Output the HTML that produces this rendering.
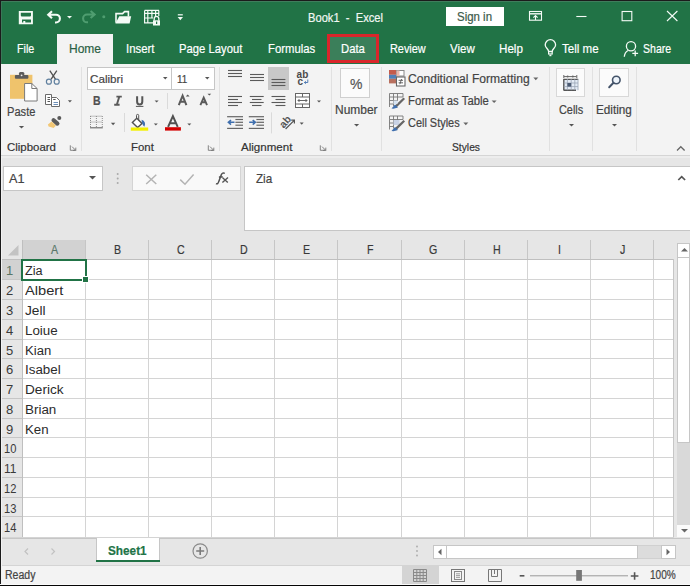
<!DOCTYPE html>
<html><head><meta charset="utf-8"><style>
html,body{margin:0;padding:0;width:690px;height:586px;overflow:hidden;background:#f3f3f3}
body>*{position:absolute;box-sizing:border-box}
span{font-family:"Liberation Sans",sans-serif;white-space:nowrap;transform-origin:0 0;-webkit-text-stroke:0.2px currentColor}
svg{overflow:visible}
</style></head><body>
<div style="left:0px;top:0px;width:690px;height:586px;background:#f3f3f3;"></div>
<div style="left:0px;top:0px;width:690px;height:64px;background:#217346;"></div>
<div style="left:57px;top:34px;width:56px;height:30px;background:#f3f3f3;"></div>
<div style="left:327px;top:34px;width:52px;height:29px;background:#3b7f5a;box-shadow:inset 0 0 0 3px #d9262b;"></div>
<span style="left:307.80px;top:12.00px;font-size:12.6px;line-height:12.6px;color:#f2f8f4;transform:scaleX(0.8851);">Book1&nbsp;&nbsp;-&nbsp;&nbsp;Excel</span>
<div style="left:446px;top:7px;width:58px;height:19px;background:#ffffff;"></div>
<span style="left:457.20px;top:11.00px;font-size:12px;line-height:12px;color:#3c5a4a;transform:scaleX(0.9539);">Sign in</span>
<span style="left:17.20px;top:42.00px;font-size:13px;line-height:13px;color:#ffffff;transform:scaleX(0.8259);">File</span>
<span style="left:68.50px;top:42.00px;font-size:13px;line-height:13px;color:#2a5f44;transform:scaleX(0.9228);">Home</span>
<span style="left:125.60px;top:42.00px;font-size:13px;line-height:13px;color:#ffffff;transform:scaleX(0.8736);">Insert</span>
<span style="left:179.30px;top:42.00px;font-size:13px;line-height:13px;color:#ffffff;transform:scaleX(0.8671);">Page&nbsp;Layout</span>
<span style="left:268.00px;top:42.00px;font-size:13px;line-height:13px;color:#ffffff;transform:scaleX(0.8713);">Formulas</span>
<span style="left:340.70px;top:42.00px;font-size:13px;line-height:13px;color:#ffffff;transform:scaleX(0.8704);">Data</span>
<span style="left:389.50px;top:42.00px;font-size:13px;line-height:13px;color:#ffffff;transform:scaleX(0.8376);">Review</span>
<span style="left:450.00px;top:42.00px;font-size:13px;line-height:13px;color:#ffffff;transform:scaleX(0.8840);">View</span>
<span style="left:498.60px;top:42.00px;font-size:13px;line-height:13px;color:#ffffff;transform:scaleX(0.8939);">Help</span>
<span style="left:562.40px;top:42.00px;font-size:13px;line-height:13px;color:#ffffff;transform:scaleX(0.8889);">Tell&nbsp;me</span>
<span style="left:642.90px;top:42.00px;font-size:13px;line-height:13px;color:#ffffff;transform:scaleX(0.8101);">Share</span>
<svg style="left:0px;top:0px;" width="690" height="34" viewBox="0 0 690 34"><path fill="#f4fbf6" fill-rule="evenodd" d="M18.8 11H32.9V24.3H18.8Z M20.8 12.8V15.5Q20.8 16.6 21.9 16.6H29.9Q31 16.6 31 15.5V12.8Z M22 19.6V22.5H23.3V20.9H25.3V22.5H31V19.6Z"/><path d="M52 11.2L48.2 14.7L52 18.2M48.6 14.7H56A3.9 3.9 0 0 1 56 22.5H55" fill="none" stroke="#f4fbf6" stroke-width="2.1" stroke-linejoin="miter"/><path d="M67 16H72L69.5 18.6Z" fill="#f4fbf6"/><path d="M90.6 11L94.6 14.5L90.6 18M94.2 14.5H87A3.9 3.9 0 0 0 87 22.3H88" fill="none" stroke="#4f9d70" stroke-width="2.1"/><circle cx="103.8" cy="16.8" r="1.5" fill="#4f9d70"/><path d="M116 22.8V13.6H122.6L124.6 11.6H128.4V16.4" fill="none" stroke="#f4fbf6" stroke-width="1.6"/><path d="M119.3 16.2H131.2L129.6 23.6H115.4Z" fill="#f4fbf6"/><path d="M144.6 10.4H159M144.6 13.3H159M144.6 18H153M144.6 22.9H153M144.6 10.4V23.4M147.8 10.4V23.4M151.9 10.4V18.5M155.6 10.4V16M158.8 10.4V16" fill="none" stroke="#f4fbf6" stroke-width="1.2"/><path d="M154.2 20.5V18.6A2.3 2.3 0 0 1 158.8 18.6V20.5" fill="none" stroke="#f4fbf6" stroke-width="1.3"/><rect x="153" y="20.3" width="7" height="5.2" fill="#f4fbf6"/><rect x="156" y="21.6" width="1.2" height="2.4" fill="#217346"/><path d="M177.8 14.8H182.8" stroke="#f4fbf6" stroke-width="1.2"/><path d="M177.6 17H183L180.3 20.3Z" fill="#f4fbf6"/><rect x="529.5" y="11.5" width="12" height="8.7" fill="none" stroke="#f4fbf6" stroke-width="1.1"/><path d="M529.5 13.8H541.5" stroke="#f4fbf6" stroke-width="1.4"/><path d="M535.5 20V15.6M533.4 17.6L535.5 15.5L537.6 17.6" fill="none" stroke="#f4fbf6" stroke-width="1.1"/><path d="M576.3 16.5H586.5" stroke="#f4fbf6" stroke-width="1.1"/><rect x="622.1" y="11.5" width="9.7" height="9.2" fill="none" stroke="#f4fbf6" stroke-width="1.1"/><path d="M667 11L677.4 21M677.4 11L667 21" stroke="#f4fbf6" stroke-width="1.1"/></svg>
<svg style="left:0px;top:34px;" width="690" height="30" viewBox="0 0 690 30"><path d="M548.6 17.4C548.6 15.2 545.2 13.6 545.2 10.9A5.2 5.2 0 1 1 555.6 10.9C555.6 13.6 552.2 15.2 552.2 17.4Z" fill="none" stroke="#f4fbf6" stroke-width="1.3"/><rect x="548.6" y="17.6" width="3.6" height="2.4" fill="none" stroke="#f4fbf6" stroke-width="1.2"/><path d="M549.4 21.5H551.4" stroke="#f4fbf6" stroke-width="1.4"/><circle cx="631" cy="12.2" r="4.6" fill="none" stroke="#f4fbf6" stroke-width="1.3"/><path d="M628 16.5Q624.6 18.5 624.3 22.8" fill="none" stroke="#f4fbf6" stroke-width="1.3"/><path d="M635.2 16.4V22.2M632.3 19.3H638.1" stroke="#f4fbf6" stroke-width="1.3"/></svg>
<div style="left:0px;top:155px;width:690px;height:1px;background:#d5d5d5;"></div>
<div style="left:81px;top:67px;width:1px;height:84px;background:#e1e1e1;"></div>
<div style="left:219px;top:67px;width:1px;height:84px;background:#e1e1e1;"></div>
<div style="left:331px;top:67px;width:1px;height:84px;background:#e1e1e1;"></div>
<div style="left:381px;top:67px;width:1px;height:84px;background:#e1e1e1;"></div>
<div style="left:549px;top:67px;width:1px;height:84px;background:#e1e1e1;"></div>
<div style="left:592px;top:67px;width:1px;height:84px;background:#e1e1e1;"></div>
<div style="left:636px;top:67px;width:1px;height:84px;background:#e1e1e1;"></div>
<svg style="left:0px;top:64px;" width="690" height="92" viewBox="0 0 690 92"><rect x="10" y="10.8" width="22.4" height="24" fill="#efc36c"/><rect x="14.9" y="11" width="13.5" height="3.8" rx="1" fill="#5c5c5c"/><rect x="18.9" y="8" width="5.5" height="3.5" rx="1.5" fill="#5c5c5c"/><circle cx="21.6" cy="11.3" r="0.9" fill="#eee"/><path d="M24.6 19.5H31.8L37.1 24.5V37H24.6Z" fill="#fff" stroke="#7a7a7a" stroke-width="1"/><path d="M31.8 19.5V24.5H37.1" fill="none" stroke="#7a7a7a" stroke-width="1"/><path d="M49.8 6.6L55.6 15.4M56.8 6.6L51 15.4" stroke="#505050" stroke-width="1.3"/><circle cx="48.9" cy="17.7" r="2.5" fill="none" stroke="#60809f" stroke-width="1.2"/><circle cx="56.7" cy="17.7" r="2.5" fill="none" stroke="#60809f" stroke-width="1.2"/><path d="M45.5 30.5H51.5V40.5H45.5Z" fill="#fff" stroke="#6a6a6a" stroke-width="1"/><path d="M47.5 33.5H50M47.5 35.5H50M47.5 37.5H50" stroke="#555" stroke-width="1"/><path d="M51.5 33.5H56.5L59.5 36.5V42.5H51.5Z" fill="#fff" stroke="#6a6a6a" stroke-width="1"/><path d="M53.2 35.5H55.6" stroke="#555" stroke-width="1"/><path d="M53.5 38.5H58M53.5 40.5H58" stroke="#6d8fb8" stroke-width="1"/><path d="M67.9 36.3H71.9L69.9 38.6Z" fill="#555"/><circle cx="59.3" cy="54.1" r="2" fill="#5a5a5a"/><path d="M53.6 56.2L57.4 59.6" stroke="#5a5a5a" stroke-width="4.2" stroke-linecap="round"/><path d="M51.6 57.6L56 61.6L53.6 63.9L48.6 62.4L47.9 60.4Z" fill="#f2c775"/><path d="M18.9 62H24.1L21.5 64.5Z" fill="#555"/><path d="M70.3 81.3V86.3H75.3" fill="none" stroke="#777" stroke-width="0.9"/><path d="M72 82.6L75.8 86.4M75.8 83.6V86.4H73" fill="none" stroke="#777" stroke-width="0.9"/><path d="M208.3 81.3V86.3H213.3" fill="none" stroke="#777" stroke-width="0.9"/><path d="M210 82.6L213.8 86.4M213.8 83.6V86.4H211" fill="none" stroke="#777" stroke-width="0.9"/><path d="M320.3 81.3V86.3H325.3" fill="none" stroke="#777" stroke-width="0.9"/><path d="M322 82.6L325.8 86.4M325.8 83.6V86.4H323" fill="none" stroke="#777" stroke-width="0.9"/></svg>
<span style="left:7.30px;top:106.00px;font-size:12.5px;line-height:12.5px;color:#444;transform:scaleX(0.8885);">Paste</span>
<div style="left:87px;top:67px;width:85px;height:23px;background:#ffffff;box-shadow:inset 0 0 0 1px #c6c6c6;"></div>
<div style="left:171px;top:67px;width:44px;height:23px;background:#ffffff;box-shadow:inset 0 0 0 1px #c6c6c6;"></div>
<span style="left:89.50px;top:74.00px;font-size:11.5px;line-height:11.5px;color:#444;transform:scaleX(1.0126);">Calibri</span>
<span style="left:176.70px;top:74.00px;font-size:11.5px;line-height:11.5px;color:#444;transform:scaleX(0.8629);">11</span>
<svg style="left:162.55px;top:77.3px;" width="4.5" height="2.6" viewBox="0 0 4.5 2.6"><path d="M0 0H4.5L2.25 2.6Z" fill="#555"/></svg>
<svg style="left:205.25px;top:77.3px;" width="4.5" height="2.6" viewBox="0 0 4.5 2.6"><path d="M0 0H4.5L2.25 2.6Z" fill="#555"/></svg>
<span style="left:92.60px;top:95.00px;font-size:12px;line-height:12px;color:#505050;font-weight:bold;transform:scaleX(0.8770);">B</span>
<svg style="left:0px;top:64px;" width="690" height="92" viewBox="0 0 690 92"><path d="M116.4 32.6H121.8M114.2 40.8H119.6M119.3 32.6L116.8 40.8" stroke="#5a5a5a" stroke-width="1.9" fill="none"/><path d="M137.1 32.3V37.6Q137.1 40.6 139.7 40.6Q142.3 40.6 142.3 37.6V32.3" fill="none" stroke="#555" stroke-width="2"/><path d="M135.9 42.4H143.4" stroke="#555" stroke-width="1"/><path d="M154.6 36.4H158.6L156.6 38.4Z" fill="#555"/><path d="M178.8 41.2L182.6 31.6L186.4 41.2M180.2 37.8H185" fill="none" stroke="#5a5a5a" stroke-width="2"/><path d="M185.8 32.6L187.7 30.6L189.6 32.6Z" fill="#555"/><path d="M200.4 41.2L203.7 33.6L207 41.2M201.6 38.2H205.8" fill="none" stroke="#5a5a5a" stroke-width="1.9"/><path d="M207.5 29.8H211.2L209.35 31.6Z" fill="#555"/><path d="M90.5 52V63.8M96.4 52V63.8M102.3 52V63.8M90.5 52.2H102.3M90.5 58H102.3" fill="none" stroke="#8c8c8c" stroke-width="1" stroke-dasharray="1 1"/><path d="M90 63.8H102.8" stroke="#666" stroke-width="1.1"/><path d="M110.9 58.8H115.3L113.1 61.2Z" fill="#555"/><path d="M136.8 54.2L142 59.4L137.6 63.6L132.4 58.4Z" fill="#fff" stroke="#505050" stroke-width="1.4"/><path d="M136.5 54.5V51.4Q136.5 50.4 137.6 50.4Q138.7 50.4 138.7 51.4V56.2" fill="none" stroke="#555" stroke-width="1"/><path d="M141.6 55.8Q146.6 57.6 144.4 62.8Q141.6 60.4 141.6 55.8Z" fill="#3f6fae"/><rect x="130.8" y="63.5" width="17.4" height="3.2" fill="#f2f000"/><path d="M153.8 59.4H157.8L155.8 61.6Z" fill="#555"/><path d="M168.1 62.8L172.9 52.2L177.7 62.8M169.9 59.2H175.9" fill="none" stroke="#505050" stroke-width="2"/><rect x="165" y="63.2" width="15.9" height="3.4" fill="#d40000"/><path d="M187.3 59.4H191.3L189.3 61.6Z" fill="#555"/><rect x="167" y="29" width="1" height="16" fill="#dadada"/><rect x="124" y="49" width="1" height="19" fill="#dadada"/></svg>
<div style="left:268px;top:67px;width:21px;height:23px;background:#c8c8c8;"></div>
<svg style="left:0px;top:64px;" width="690" height="92" viewBox="0 0 690 92"><path d="M228 6.5H242" stroke="#5a5a5a" stroke-width="1.1"/><path d="M228 9.5H242" stroke="#5a5a5a" stroke-width="1.1"/><path d="M228 12.5H242" stroke="#5a5a5a" stroke-width="1.1"/><path d="M250 10.5H264" stroke="#5a5a5a" stroke-width="1.1"/><path d="M250 13.5H264" stroke="#5a5a5a" stroke-width="1.1"/><path d="M250 16.5H264" stroke="#5a5a5a" stroke-width="1.1"/><path d="M271.5 15.5H285.4" stroke="#5a5a5a" stroke-width="1.1"/><path d="M271.5 18.5H285.4" stroke="#5a5a5a" stroke-width="1.1"/><path d="M271.5 21.5H285.4" stroke="#5a5a5a" stroke-width="1.1"/><path d="M228 32.5H242" stroke="#5a5a5a" stroke-width="1.1"/><path d="M228 35.5H238" stroke="#5a5a5a" stroke-width="1.1"/><path d="M228 38.5H242" stroke="#5a5a5a" stroke-width="1.1"/><path d="M228 41.5H238" stroke="#5a5a5a" stroke-width="1.1"/><path d="M249.8 32.5H263.7" stroke="#5a5a5a" stroke-width="1.1"/><path d="M252 35.5H261.5" stroke="#5a5a5a" stroke-width="1.1"/><path d="M249.8 38.5H263.7" stroke="#5a5a5a" stroke-width="1.1"/><path d="M252 41.5H261.5" stroke="#5a5a5a" stroke-width="1.1"/><path d="M271.5 32.5H285.4" stroke="#5a5a5a" stroke-width="1.1"/><path d="M275.5 35.5H285.4" stroke="#5a5a5a" stroke-width="1.1"/><path d="M271.5 38.5H285.4" stroke="#5a5a5a" stroke-width="1.1"/><path d="M275.5 41.5H285.4" stroke="#5a5a5a" stroke-width="1.1"/><path d="M227.1 52.7H243" stroke="#666" stroke-width="1.2"/><path d="M227.1 64.4H243" stroke="#666" stroke-width="1.2"/><path d="M235.4 55.5H243" stroke="#666" stroke-width="1.2"/><path d="M235.4 58.3H243" stroke="#666" stroke-width="1.2"/><path d="M235.4 61.2H243" stroke="#666" stroke-width="1.2"/><path d="M234.5 58.3H228.6M231 56L228.4 58.3L231 60.6" fill="none" stroke="#3f6fae" stroke-width="1.6"/><path d="M248.8 52.7H264" stroke="#666" stroke-width="1.2"/><path d="M248.8 64.4H264" stroke="#666" stroke-width="1.2"/><path d="M256.4 55.5H264" stroke="#666" stroke-width="1.2"/><path d="M256.4 58.3H264" stroke="#666" stroke-width="1.2"/><path d="M256.4 61.2H264" stroke="#666" stroke-width="1.2"/><path d="M249.2 58.3H255.1M252.7 56L255.3 58.3L252.7 60.6" fill="none" stroke="#3f6fae" stroke-width="1.6"/><rect x="271" y="48.4" width="1" height="21" fill="#dadada"/><g transform="translate(285.2 57.6) rotate(-48)"><text x="-6.3" y="3.6" font-family="Liberation Sans" font-weight="bold" font-size="10.5" fill="#555">ab</text></g><path d="M285.6 65L294.2 56.4M291.2 56.2H294.4V59.4" fill="none" stroke="#555" stroke-width="1.2"/><path d="M299.7 58.6H303.7L301.7 60.8Z" fill="#555"/><text x="296.6" y="14.4" font-family="Liberation Sans" font-weight="bold" font-size="10" fill="#4a4a4a">ab</text><text x="297.4" y="21.4" font-family="Liberation Sans" font-weight="bold" font-size="10" fill="#4a4a4a">c</text><path d="M307.8 15.5V18.5H304.5M305.8 17.2L304.4 18.5L305.8 19.8" fill="none" stroke="#3f6fae" stroke-width="0.9"/><rect x="295.5" y="29.5" width="14" height="14" fill="#fff" stroke="#666" stroke-width="1"/><path d="M295.5 33H309.5M295.5 40H309.5M302.5 29.5V33M302.5 40V43.5" stroke="#666" stroke-width="1"/><path d="M298 36.5H307M299.5 35L298 36.5L299.5 38M305.5 35L307 36.5L305.5 38" fill="none" stroke="#555" stroke-width="0.9"/><path d="M317 36.4H321L319 38.6Z" fill="#555"/></svg>
<div style="left:340px;top:68px;width:30px;height:30px;background:#fbfbfb;box-shadow:inset 0 0 0 1px #cfcfcf;"></div>
<span style="left:350.20px;top:77.00px;font-size:14px;line-height:14px;color:#555;transform:scaleX(0.9961);">%</span>
<span style="left:335.20px;top:104.00px;font-size:12px;line-height:12px;color:#444;transform:scaleX(0.9982);">Number</span>
<svg style="left:354.4px;top:124.10000000000001px;" width="5.2" height="2.6" viewBox="0 0 5.2 2.6"><path d="M0 0H5.2L2.6 2.6Z" fill="#555"/></svg>
<svg style="left:0px;top:64px;" width="690" height="92" viewBox="0 0 690 92"><rect x="389" y="6" width="7.5" height="4.8" fill="#c45b4c"/><rect x="389" y="10.8" width="7.5" height="4" fill="#4f7fb8"/><rect x="389" y="14.8" width="7.5" height="4.6" fill="#b8705f"/><rect x="396.5" y="6.5" width="7.5" height="5.5" fill="#fff" stroke="#888" stroke-width="1"/><rect x="396.5" y="6.5" width="3" height="5.5" fill="#e9b8ae"/><rect x="396.5" y="13" width="8.5" height="9" fill="#fff" stroke="#666" stroke-width="1.1"/><path d="M398.6 16.3H403M398.6 18.8H403M401.6 15L399.8 20.2" stroke="#555" stroke-width="0.9"/><path d="M389.5 29.5H403V33H389.5ZM389.5 33V43M393.5 29.5V42M397.5 29.5V36M389.5 36.5H398M389.5 40H393" fill="none" stroke="#777" stroke-width="0.9"/><path d="M394 42.5L403.5 33.5L405 35L396 44Z" fill="#666"/><path d="M391.5 44.5L395 40.5L398 43.5L393.5 44.8Z" fill="#3f6fae"/><rect x="393.5" y="36.5" width="4" height="3.5" fill="#d7e3f1"/><path d="M389.5 52H403V55.5H389.5ZM389.5 55.5V65.5M393.5 52V64.5M397.5 52V58.5M389.5 59H398M389.5 62.5H393" fill="none" stroke="#777" stroke-width="0.9"/><rect x="393.5" y="56" width="6" height="5" fill="#c9d3e6"/><path d="M394 65L403.5 56L405 57.5L396 66.5Z" fill="#666"/><path d="M391.5 67L395 63L398 66L393.5 67.3Z" fill="#3f6fae"/><path d="M533.3 13.6H538.3L535.8 16.2Z" fill="#666"/><path d="M491.6 36.4H496.6L494.1 39Z" fill="#666"/><path d="M463.3 58.6H468.3L465.8 61.2Z" fill="#666"/></svg>
<span style="left:408.20px;top:73.00px;font-size:12px;line-height:12px;color:#444;transform:scaleX(1.0081);">Conditional&nbsp;Formatting</span>
<span style="left:408.20px;top:95.00px;font-size:12px;line-height:12px;color:#444;transform:scaleX(0.9393);">Format&nbsp;as&nbsp;Table</span>
<span style="left:408.20px;top:117.00px;font-size:12px;line-height:12px;color:#444;transform:scaleX(0.9103);">Cell&nbsp;Styles</span>
<div style="left:556px;top:68px;width:29px;height:29px;background:#fbfbfb;box-shadow:inset 0 0 0 1px #d8d8d8;"></div>
<div style="left:599px;top:68px;width:30px;height:29px;background:#fbfbfb;box-shadow:inset 0 0 0 1px #d8d8d8;"></div>
<svg style="left:0px;top:64px;" width="690" height="92" viewBox="0 0 690 92"><path d="M564 12.6H576.5M563.8 11V14.2M576.8 11V14.2" stroke="#666" stroke-width="1"/><circle cx="567.6" cy="12.6" r="1" fill="#666"/><circle cx="572.8" cy="12.6" r="1" fill="#666"/><rect x="563.8" y="15.2" width="14.4" height="11" fill="#e3ebf5"/><path d="M563.8 15.4H578.2M563.8 26.2H576M563.8 15V26.5" stroke="#555" stroke-width="1.4"/><path d="M563.8 19H578M563.8 22.6H578M567.4 15V26.2M571.2 15V26.2M574.8 15V26.2M578 15V26.2" stroke="#9aa5b5" stroke-width="0.8"/><rect x="567.4" y="19" width="3.8" height="3.6" fill="#4a5a72"/><circle cx="616.3" cy="16" r="3.8" fill="#eef4fb" stroke="#44546a" stroke-width="1.6"/><path d="M613.5 18.8L609.2 23.2" stroke="#44546a" stroke-width="2" stroke-linecap="round"/><path d="M677 86.5L680.8 82.7L684.6 86.5" fill="none" stroke="#666" stroke-width="1.3"/></svg>
<span style="left:559.10px;top:104.00px;font-size:12px;line-height:12px;color:#444;transform:scaleX(0.9073);">Cells</span>
<span style="left:596.30px;top:104.00px;font-size:12px;line-height:12px;color:#444;transform:scaleX(0.9785);">Editing</span>
<svg style="left:568.7px;top:124.3px;" width="5" height="2.6" viewBox="0 0 5 2.6"><path d="M0 0H5L2.5 2.6Z" fill="#555"/></svg>
<svg style="left:611.8px;top:124.3px;" width="5" height="2.6" viewBox="0 0 5 2.6"><path d="M0 0H5L2.5 2.6Z" fill="#555"/></svg>
<span style="left:6.50px;top:142.00px;font-size:11.5px;line-height:11.5px;color:#333;transform:scaleX(0.9935);">Clipboard</span>
<span style="left:130.60px;top:142.00px;font-size:11.5px;line-height:11.5px;color:#333;transform:scaleX(0.9909);">Font</span>
<span style="left:241.00px;top:142.00px;font-size:11.5px;line-height:11.5px;color:#333;transform:scaleX(1.0052);">Alignment</span>
<span style="left:451.50px;top:142.00px;font-size:11.5px;line-height:11.5px;color:#333;transform:scaleX(0.8941);">Styles</span>
<div style="left:0px;top:156px;width:690px;height:84px;background:#e6e6e6;"></div>
<div style="left:0px;top:156px;width:690px;height:2px;background:#ededed;"></div>
<div style="left:3px;top:166px;width:100px;height:25px;background:#ffffff;box-shadow:inset 0 0 0 1px #c6c6c6;"></div>
<span style="left:9.00px;top:172.00px;font-size:13px;line-height:13px;color:#444;transform:scaleX(0.9748);">A1</span>
<svg style="left:88.7px;top:175.9px;" width="7" height="3.4" viewBox="0 0 7 3.4"><path d="M0 0H7L3.5 3.4Z" fill="#555"/></svg>
<div style="left:132px;top:166px;width:109px;height:25px;background:#f9f9f9;box-shadow:inset 0 0 0 1px #d4d4d4;"></div>
<svg style="left:0px;top:156px;" width="690" height="84" viewBox="0 0 690 84"><circle cx="117.7" cy="18" r="1" fill="#aaa"/><circle cx="117.7" cy="22.5" r="1" fill="#aaa"/><circle cx="117.7" cy="27" r="1" fill="#aaa"/><path d="M146.2 18.8L156.3 28M156.3 18.8L146.2 28" stroke="#b4b4b4" stroke-width="1.5"/><path d="M180.2 23.6L185 28.2L193.6 18.6" fill="none" stroke="#b4b4b4" stroke-width="1.5"/></svg>
<svg style="left:0px;top:156px;" width="690" height="84" viewBox="0 0 690 84"><path d="M216 27.6Q217.8 28.6 218.8 25.4L221.4 18.6Q222.4 16.2 224.8 17.4M218.9 20.9H222.8" fill="none" stroke="#505050" stroke-width="1.5"/><path d="M222.6 21.8L227.8 26.6M228 21.6L222.4 26.6" stroke="#555" stroke-width="1.4"/></svg>
<div style="left:244px;top:166px;width:447px;height:65px;background:#ffffff;box-shadow:inset 0 0 0 1px #c6c6c6;"></div>
<span style="left:256.40px;top:172.00px;font-size:13px;line-height:13px;color:#444;transform:scaleX(0.8971);">Zia</span>
<svg style="left:0px;top:156px;" width="690" height="84" viewBox="0 0 690 84"><path d="M678.3 24L681.7 20.6L685.1 24" fill="none" stroke="#555" stroke-width="1.7"/></svg>
<div style="left:1px;top:240px;width:676px;height:19px;background:#e6e6e6;"></div>
<div style="left:1px;top:259px;width:21px;height:278px;background:#e6e6e6;"></div>
<div style="left:22px;top:259px;width:652px;height:278px;background:#ffffff;"></div>
<div style="left:22px;top:240px;width:63px;height:19px;background:#d2d2d2;"></div>
<div style="left:1px;top:259px;width:21px;height:20px;background:#d2d2d2;"></div>
<svg style="left:8px;top:245px;" width="11" height="11" viewBox="0 0 11 11"><path d="M10.5 0V10.5H0Z" fill="#c3c3c3"/></svg>
<div style="left:22px;top:279px;width:652px;height:1px;background:#d4d4d4;"></div>
<div style="left:1px;top:279px;width:21px;height:1px;background:#c6c6c6;"></div>
<div style="left:22px;top:299px;width:652px;height:1px;background:#d4d4d4;"></div>
<div style="left:1px;top:299px;width:21px;height:1px;background:#c6c6c6;"></div>
<div style="left:22px;top:319px;width:652px;height:1px;background:#d4d4d4;"></div>
<div style="left:1px;top:319px;width:21px;height:1px;background:#c6c6c6;"></div>
<div style="left:22px;top:339px;width:652px;height:1px;background:#d4d4d4;"></div>
<div style="left:1px;top:339px;width:21px;height:1px;background:#c6c6c6;"></div>
<div style="left:22px;top:358px;width:652px;height:1px;background:#d4d4d4;"></div>
<div style="left:1px;top:358px;width:21px;height:1px;background:#c6c6c6;"></div>
<div style="left:22px;top:378px;width:652px;height:1px;background:#d4d4d4;"></div>
<div style="left:1px;top:378px;width:21px;height:1px;background:#c6c6c6;"></div>
<div style="left:22px;top:398px;width:652px;height:1px;background:#d4d4d4;"></div>
<div style="left:1px;top:398px;width:21px;height:1px;background:#c6c6c6;"></div>
<div style="left:22px;top:418px;width:652px;height:1px;background:#d4d4d4;"></div>
<div style="left:1px;top:418px;width:21px;height:1px;background:#c6c6c6;"></div>
<div style="left:22px;top:437px;width:652px;height:1px;background:#d4d4d4;"></div>
<div style="left:1px;top:437px;width:21px;height:1px;background:#c6c6c6;"></div>
<div style="left:22px;top:457px;width:652px;height:1px;background:#d4d4d4;"></div>
<div style="left:1px;top:457px;width:21px;height:1px;background:#c6c6c6;"></div>
<div style="left:22px;top:477px;width:652px;height:1px;background:#d4d4d4;"></div>
<div style="left:1px;top:477px;width:21px;height:1px;background:#c6c6c6;"></div>
<div style="left:22px;top:497px;width:652px;height:1px;background:#d4d4d4;"></div>
<div style="left:1px;top:497px;width:21px;height:1px;background:#c6c6c6;"></div>
<div style="left:22px;top:516px;width:652px;height:1px;background:#d4d4d4;"></div>
<div style="left:1px;top:516px;width:21px;height:1px;background:#c6c6c6;"></div>
<div style="left:22px;top:537px;width:652px;height:1px;background:#d4d4d4;"></div>
<div style="left:1px;top:537px;width:21px;height:1px;background:#c6c6c6;"></div>
<div style="left:85px;top:259px;width:1px;height:278px;background:#d4d4d4;"></div>
<div style="left:85px;top:240px;width:1px;height:19px;background:#c6c6c6;"></div>
<div style="left:148px;top:259px;width:1px;height:278px;background:#d4d4d4;"></div>
<div style="left:148px;top:240px;width:1px;height:19px;background:#c6c6c6;"></div>
<div style="left:211px;top:259px;width:1px;height:278px;background:#d4d4d4;"></div>
<div style="left:211px;top:240px;width:1px;height:19px;background:#c6c6c6;"></div>
<div style="left:274px;top:259px;width:1px;height:278px;background:#d4d4d4;"></div>
<div style="left:274px;top:240px;width:1px;height:19px;background:#c6c6c6;"></div>
<div style="left:337px;top:259px;width:1px;height:278px;background:#d4d4d4;"></div>
<div style="left:337px;top:240px;width:1px;height:19px;background:#c6c6c6;"></div>
<div style="left:401px;top:259px;width:1px;height:278px;background:#d4d4d4;"></div>
<div style="left:401px;top:240px;width:1px;height:19px;background:#c6c6c6;"></div>
<div style="left:464px;top:259px;width:1px;height:278px;background:#d4d4d4;"></div>
<div style="left:464px;top:240px;width:1px;height:19px;background:#c6c6c6;"></div>
<div style="left:527px;top:259px;width:1px;height:278px;background:#d4d4d4;"></div>
<div style="left:527px;top:240px;width:1px;height:19px;background:#c6c6c6;"></div>
<div style="left:590px;top:259px;width:1px;height:278px;background:#d4d4d4;"></div>
<div style="left:590px;top:240px;width:1px;height:19px;background:#c6c6c6;"></div>
<div style="left:653px;top:259px;width:1px;height:278px;background:#d4d4d4;"></div>
<div style="left:653px;top:240px;width:1px;height:19px;background:#c6c6c6;"></div>
<div style="left:1px;top:259px;width:673px;height:1px;background:#bfbfbf;"></div>
<div style="left:22px;top:240px;width:1px;height:297px;background:#bfbfbf;"></div>
<div style="left:673px;top:259px;width:1px;height:278px;background:#c6c6c6;"></div>
<span style="left:50.86px;top:244.00px;font-size:12.5px;line-height:12.5px;color:#5a776a;transform:scaleX(0.8500);">A</span>
<span style="left:113.86px;top:244.00px;font-size:12.5px;line-height:12.5px;color:#383838;transform:scaleX(0.8500);">B</span>
<span style="left:176.56px;top:244.00px;font-size:12.5px;line-height:12.5px;color:#383838;transform:scaleX(0.8500);">C</span>
<span style="left:239.56px;top:244.00px;font-size:12.5px;line-height:12.5px;color:#383838;transform:scaleX(0.8500);">D</span>
<span style="left:302.86px;top:244.00px;font-size:12.5px;line-height:12.5px;color:#383838;transform:scaleX(0.8500);">E</span>
<span style="left:366.66px;top:244.00px;font-size:12.5px;line-height:12.5px;color:#383838;transform:scaleX(0.8500);">F</span>
<span style="left:429.27px;top:244.00px;font-size:12.5px;line-height:12.5px;color:#383838;transform:scaleX(0.8500);">G</span>
<span style="left:492.56px;top:244.00px;font-size:12.5px;line-height:12.5px;color:#383838;transform:scaleX(0.8500);">H</span>
<span style="left:557.92px;top:244.00px;font-size:12.5px;line-height:12.5px;color:#383838;transform:scaleX(0.8500);">I</span>
<span style="left:619.74px;top:244.00px;font-size:12.5px;line-height:12.5px;color:#383838;transform:scaleX(0.8500);">J</span>
<span style="left:5.99px;top:264.00px;font-size:13px;line-height:13px;color:#587565;-webkit-text-stroke:0;">1</span>
<span style="left:5.99px;top:284.00px;font-size:13px;line-height:13px;color:#3a3a3a;-webkit-text-stroke:0;">2</span>
<span style="left:5.99px;top:304.00px;font-size:13px;line-height:13px;color:#3a3a3a;-webkit-text-stroke:0;">3</span>
<span style="left:5.99px;top:324.00px;font-size:13px;line-height:13px;color:#3a3a3a;-webkit-text-stroke:0;">4</span>
<span style="left:5.99px;top:344.00px;font-size:13px;line-height:13px;color:#3a3a3a;-webkit-text-stroke:0;">5</span>
<span style="left:5.99px;top:363.00px;font-size:13px;line-height:13px;color:#3a3a3a;-webkit-text-stroke:0;">6</span>
<span style="left:5.99px;top:383.00px;font-size:13px;line-height:13px;color:#3a3a3a;-webkit-text-stroke:0;">7</span>
<span style="left:5.99px;top:403.00px;font-size:13px;line-height:13px;color:#3a3a3a;-webkit-text-stroke:0;">8</span>
<span style="left:5.99px;top:423.00px;font-size:13px;line-height:13px;color:#3a3a3a;-webkit-text-stroke:0;">9</span>
<span style="left:3.90px;top:442.00px;font-size:13px;line-height:13px;color:#3a3a3a;transform:scaleX(0.8576);-webkit-text-stroke:0;">10</span>
<span style="left:3.90px;top:462.00px;font-size:13px;line-height:13px;color:#3a3a3a;transform:scaleX(0.9190);-webkit-text-stroke:0;">11</span>
<span style="left:3.90px;top:482.00px;font-size:13px;line-height:13px;color:#3a3a3a;transform:scaleX(0.8576);-webkit-text-stroke:0;">12</span>
<span style="left:3.90px;top:502.00px;font-size:13px;line-height:13px;color:#3a3a3a;transform:scaleX(0.8576);-webkit-text-stroke:0;">13</span>
<span style="left:3.90px;top:521.00px;font-size:13px;line-height:13px;color:#3a3a3a;transform:scaleX(0.8576);-webkit-text-stroke:0;">14</span>
<span style="left:24.90px;top:265.00px;font-size:12.5px;line-height:12.5px;color:#2b2b2b;transform:scaleX(1.0136);-webkit-text-stroke:0;">Zia</span>
<span style="left:24.90px;top:285.00px;font-size:12.5px;line-height:12.5px;color:#2b2b2b;transform:scaleX(1.1730);-webkit-text-stroke:0;">Albert</span>
<span style="left:24.90px;top:305.00px;font-size:12.5px;line-height:12.5px;color:#2b2b2b;transform:scaleX(1.0983);-webkit-text-stroke:0;">Jell</span>
<span style="left:24.90px;top:325.00px;font-size:12.5px;line-height:12.5px;color:#2b2b2b;transform:scaleX(1.0693);-webkit-text-stroke:0;">Loiue</span>
<span style="left:24.90px;top:345.00px;font-size:12.5px;line-height:12.5px;color:#2b2b2b;transform:scaleX(1.0473);-webkit-text-stroke:0;">Kian</span>
<span style="left:24.90px;top:364.00px;font-size:12.5px;line-height:12.5px;color:#2b2b2b;transform:scaleX(1.0674);-webkit-text-stroke:0;">Isabel</span>
<span style="left:24.90px;top:384.00px;font-size:12.5px;line-height:12.5px;color:#2b2b2b;transform:scaleX(1.0898);-webkit-text-stroke:0;">Derick</span>
<span style="left:24.90px;top:404.00px;font-size:12.5px;line-height:12.5px;color:#2b2b2b;transform:scaleX(1.0727);-webkit-text-stroke:0;">Brian</span>
<span style="left:24.90px;top:424.00px;font-size:12.5px;line-height:12.5px;color:#2b2b2b;transform:scaleX(1.0611);-webkit-text-stroke:0;">Ken</span>
<div style="left:21px;top:259px;width:66px;height:22px;box-shadow:inset 0 0 0 2px #217346;"></div>
<div style="left:83px;top:277px;width:5px;height:5px;background:#217346;box-shadow:0 0 0 1px #fff;"></div>
<div style="left:22px;top:259px;width:63px;height:2px;background:#217346;"></div>
<div style="left:674px;top:240px;width:16px;height:298px;background:#e6e6e6;"></div>
<div style="left:677px;top:243px;width:13px;height:295px;background:#e6e6e6;"></div>
<div style="left:677px;top:243px;width:13px;height:15px;background:#ffffff;box-shadow:inset 0 0 0 1px #c6c6c6;"></div>
<div style="left:677px;top:443px;width:13px;height:82px;background:#d9d9d9;"></div>
<div style="left:677px;top:257px;width:13px;height:186px;background:#ffffff;box-shadow:inset 0 0 0 1px #c6c6c6;"></div>
<div style="left:677px;top:525px;width:13px;height:12px;background:#fbfbfb;"></div>
<svg style="left:680.9px;top:248.0px;" width="7" height="3.6" viewBox="0 0 7 3.6"><path d="M0 3.6H7L3.5 0Z" fill="#666"/></svg>
<svg style="left:680.7px;top:529.2px;" width="7" height="3.6" viewBox="0 0 7 3.6"><path d="M0 0H7L3.5 3.6Z" fill="#666"/></svg>
<div style="left:0px;top:537px;width:690px;height:28px;background:#e6e6e6;"></div>
<div style="left:0px;top:537px;width:674px;height:1px;background:#d4d4d4;"></div>
<div style="left:0px;top:538px;width:690px;height:1px;background:#c6c6c6;"></div>
<div style="left:96px;top:538px;width:64px;height:24px;background:#ffffff;box-shadow:inset 1px 0 0 #c6c6c6, inset -1px 0 0 #c6c6c6;"></div>
<div style="left:96px;top:560px;width:64px;height:2px;background:#217346;"></div>
<span style="left:107.90px;top:544.00px;font-size:13px;line-height:13px;color:#217346;font-weight:bold;transform:scaleX(0.9055);">Sheet1</span>
<svg style="left:0px;top:537px;" width="690" height="28" viewBox="0 0 690 28"><path d="M28 11.5L25 14.5L28 17.5" fill="none" stroke="#c2c2c2" stroke-width="1.2"/><path d="M51.5 11.5L54.5 14.5L51.5 17.5" fill="none" stroke="#c2c2c2" stroke-width="1.2"/><circle cx="200.2" cy="14" r="7.2" fill="none" stroke="#8a8a8a" stroke-width="1.2"/><path d="M200.2 10V18M196.2 14H204.2" stroke="#7a7a7a" stroke-width="1.6"/><circle cx="417" cy="9.5" r="0.9" fill="#aaa"/><circle cx="417" cy="14" r="0.9" fill="#aaa"/><circle cx="417" cy="18.5" r="0.9" fill="#aaa"/></svg>
<div style="left:433px;top:545px;width:243px;height:14px;background:#dcdcdc;box-shadow:inset 0 0 0 1px #d0d0d0;"></div>
<div style="left:433px;top:545px;width:14px;height:14px;background:#ffffff;box-shadow:inset 0 0 0 1px #c6c6c6;"></div>
<div style="left:446px;top:545px;width:192px;height:14px;background:#ffffff;box-shadow:inset 0 0 0 1px #c6c6c6;"></div>
<div style="left:661px;top:545px;width:15px;height:14px;background:#ffffff;box-shadow:inset 0 0 0 1px #c6c6c6;"></div>
<svg style="left:0px;top:545px;" width="690" height="14" viewBox="0 0 690 14"><path d="M441.5 3.8V10.2L438 7Z" fill="#666"/><path d="M666.5 3.8V10.2L670 7Z" fill="#666"/></svg>
<div style="left:0px;top:565px;width:690px;height:19px;background:#f3f3f3;"></div>
<div style="left:0px;top:565px;width:690px;height:1px;background:#d4d4d4;"></div>
<span style="left:5.20px;top:569.00px;font-size:12px;line-height:12px;color:#444;transform:scaleX(0.8793);">Ready</span>
<span style="left:650.10px;top:569.00px;font-size:12px;line-height:12px;color:#444;transform:scaleX(0.8407);">100%</span>
<div style="left:402px;top:566px;width:37px;height:18px;background:#d4d4d4;"></div>
<svg style="left:0px;top:565px;" width="690" height="19" viewBox="0 0 690 19"><path d="M413.5 4.5H426.5M413.5 7.5H426.5M413.5 10.5H426.5M413.5 13.5H426.5M413.5 16.5H426.5M413.5 4.5V16.5M416.8 4.5V16.5M420 4.5V16.5M423.2 4.5V16.5M426.5 4.5V16.5" fill="none" stroke="#8a8a8a" stroke-width="1"/><rect x="451.5" y="4.5" width="13" height="12" fill="none" stroke="#777" stroke-width="1"/><rect x="454.5" y="6.5" width="7" height="8" fill="none" stroke="#888" stroke-width="1"/><path d="M456 8.8H460M456 10.6H460M456 12.4H460" stroke="#888" stroke-width="0.8"/><path d="M488.5 4.5H501.5V16.5H488.5Z M491.5 4.5V11.5H497.5V4.5M494.5 4.5V9" fill="none" stroke="#777" stroke-width="1"/><path d="M519.7 10.8H524.4" stroke="#555" stroke-width="1.6"/><path d="M530 10.8H628" stroke="#999" stroke-width="1"/><rect x="576.2" y="5" width="5.7" height="10.8" fill="#777"/><path d="M630.8 11H638.4M634.6 7.3V14.8" stroke="#555" stroke-width="1.6"/></svg>
<div style="left:0px;top:0px;width:690px;height:1px;background:#1b1b1b;"></div>
<div style="left:0px;top:0px;width:1px;height:586px;background:#1b1b1b;"></div>
<div style="left:0px;top:584px;width:690px;height:1px;background:#fafafa;"></div>
<div style="left:0px;top:585px;width:690px;height:1px;background:#050505;"></div>
<div style="left:1px;top:1px;width:689px;height:1px;background:#3f7d5c;"></div>
<div style="left:1px;top:1px;width:1px;height:63px;background:#3a7858;"></div>
<div style="left:1px;top:156px;width:1px;height:428px;background:#f2f2f2;"></div>
</body></html>
